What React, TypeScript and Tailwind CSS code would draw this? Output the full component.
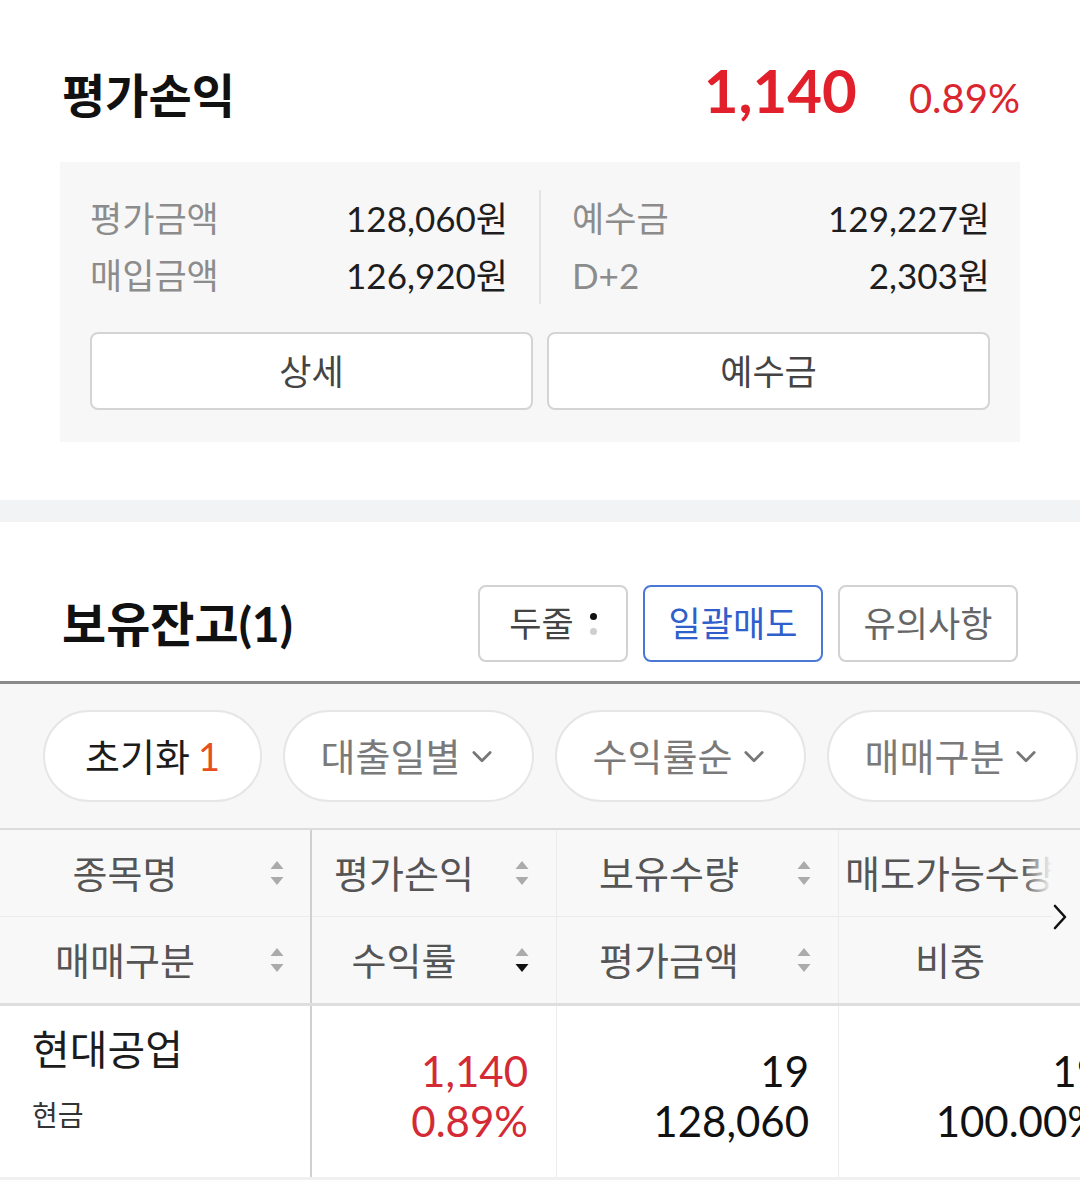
import React from "react";

const FONT = "font-[family-name:Lato,'Noto_Sans_CJK_KR',sans-serif]";

function SortIcon({ active }: { active?: boolean }) {
  return (
    <svg width="16" height="28" viewBox="0 0 16 28">
      <path d="M8 2 L14.5 10 L1.5 10 Z" fill="#ababab" />
      <path d="M1.5 18 L14.5 18 L8 26 Z" fill={active ? "#111" : "#ababab"} />
    </svg>
  );
}

function ChevronDown() {
  return (
    <svg width="28" height="28" viewBox="0 0 24 24" fill="none" stroke="#777" strokeWidth="2.4" strokeLinecap="round" strokeLinejoin="round">
      <path d="M5 9l7 7 7-7" />
    </svg>
  );
}

function InfoRow({ label, value }: { label: string; value: string }) {
  return (
    <div className="flex h-[57px] items-center justify-between">
      <span className="text-[35px] text-[#8c8c8c]">{label}</span>
      <span className="text-[35px] text-[#1e1e1e]">{value}</span>
    </div>
  );
}

function Pill({ label, badge, arrow }: { label: string; badge?: string; arrow?: boolean }) {
  return (
    <div className="flex h-[92px] items-center justify-center gap-2 rounded-full border-2 border-[#e6e6e6] bg-white">
      <span className={`text-[38px] ${badge ? "text-[#1c1c1c]" : "text-[#7a7a7a]"}`}>{label}</span>
      {badge && <span className="text-[38px] text-[#e6501e]">{badge}</span>}
      {arrow && <ChevronDown />}
    </div>
  );
}

function HeadCell({ label, textW, iconW, active }: { label: string; textW: string; iconW: string; active?: boolean }) {
  return (
    <div className="flex h-[86px] items-center">
      <div className={`${textW} text-center text-[38px] text-[#555]`}>{label}</div>
      <div className={`${iconW} flex justify-center`}>
        <SortIcon active={active} />
      </div>
    </div>
  );
}

export default function App() {
  return (
    <div className={`${FONT} w-[1080px] h-[1194px] overflow-hidden bg-white`}>
      {/* 평가손익 */}
      <section className="px-[60px] pt-[50px]">
        <div className="flex items-baseline justify-between">
          <h1 className="pl-[2px] text-[47px] font-bold leading-[58px] text-[#111]">평가손익</h1>
          <div className="flex items-baseline gap-[52px]">
            <span className="text-[60px] font-bold leading-[80px] text-[#e2202b]">1,140</span>
            <span className="text-[40px] text-[#d9262f]">0.89%</span>
          </div>
        </div>

        <div className="mt-[32px] bg-[#f7f7f7] px-[30px] pt-[28px] pb-[32px]">
          <div className="flex">
            <div className="w-[449px] pr-[31px]">
              <InfoRow label="평가금액" value="128,060원" />
              <InfoRow label="매입금액" value="126,920원" />
            </div>
            <div className="w-[2px] bg-[#e4e4e4]" />
            <div className="flex-1 pl-[31px]">
              <InfoRow label="예수금" value="129,227원" />
              <InfoRow label="D+2" value="2,303원" />
            </div>
          </div>
          <div className="mt-[28px] grid grid-cols-2 gap-[14px]">
            <button className="h-[78px] rounded-[8px] border-2 border-[#d4d4d4] bg-white text-[35px] text-[#444]">상세</button>
            <button className="h-[78px] rounded-[8px] border-2 border-[#d4d4d4] bg-white text-[35px] text-[#444]">예수금</button>
          </div>
        </div>
      </section>

      <div className="mt-[58px] h-[22px] bg-[#f2f3f5]" />

      {/* 보유잔고 */}
      <section>
        <div className="flex items-center justify-between px-[62px] pt-[63px] pb-[19px]">
          <h2 className="text-[48px] font-bold text-[#111]">보유잔고(1)</h2>
          <div className="flex gap-[15px]">
            <button className="flex h-[77px] w-[150px] items-center justify-center gap-[16px] rounded-[8px] border-2 border-[#d2d2d2] bg-white text-[35px] text-[#444]">
              <span>두줄</span>
              <span className="flex flex-col gap-[8px]">
                <span className="h-[7px] w-[7px] rounded-full bg-[#111]" />
                <span className="h-[7px] w-[7px] rounded-full bg-[#cfcfcf]" />
              </span>
            </button>
            <button className="h-[77px] w-[180px] rounded-[8px] border-2 border-[#4a78d6] bg-white text-[35px] text-[#2f5fcb]">일괄매도</button>
            <button className="h-[77px] w-[180px] rounded-[8px] border-2 border-[#d2d2d2] bg-white text-[35px] text-[#666]">유의사항</button>
          </div>
        </div>

        <div className="border-t-[3px] border-b-2 border-t-[#8a8a8a] border-b-[#dcdcdc] bg-[#f7f7f7] px-[43px] py-[26px]">
          <div className="flex gap-[21px]">
            <div className="w-[219px] shrink-0"><Pill label="초기화" badge="1" /></div>
            <div className="w-[251px] shrink-0"><Pill label="대출일별" arrow /></div>
            <div className="w-[251px] shrink-0"><Pill label="수익률순" arrow /></div>
            <div className="w-[251px] shrink-0"><Pill label="매매구분" arrow /></div>
          </div>
        </div>

        {/* table header */}
        <div className="relative flex border-b-[3px] border-[#dedede] bg-[#f8f8f8]">
          <div className="w-[312px] shrink-0 border-r-2 border-[#d0d0d0]">
            <div className="border-b border-[#ececec]">
              <HeadCell label="종목명" textW="w-[250px]" iconW="w-[54px]" />
            </div>
            <HeadCell label="매매구분" textW="w-[250px]" iconW="w-[54px]" />
          </div>
          <div className="w-[245px] shrink-0 border-r border-[#ececec]">
            <div className="border-b border-[#ececec]">
              <HeadCell label="평가손익" textW="w-[184px]" iconW="w-[52px]" />
            </div>
            <HeadCell label="수익률" textW="w-[184px]" iconW="w-[52px]" active />
          </div>
          <div className="w-[282px] shrink-0 border-r border-[#ececec]">
            <div className="border-b border-[#ececec]">
              <HeadCell label="보유수량" textW="w-[224px]" iconW="w-[46px]" />
            </div>
            <HeadCell label="평가금액" textW="w-[224px]" iconW="w-[46px]" />
          </div>
          <div className="w-[262px] shrink-0">
            <div className="relative flex h-[87px] w-[213px] items-center overflow-hidden border-b border-[#ececec] pl-[6px]">
              <span className="whitespace-nowrap text-[38px] text-[#555]">매도가능수량</span>
              <div className="absolute inset-y-0 right-0 w-[30px] bg-gradient-to-r from-[#f8f8f8]/0 to-[#f8f8f8]" />
            </div>
            <div className="flex h-[86px] w-[222px] items-center justify-center text-[38px] text-[#555]">비중</div>
          </div>
          <svg className="absolute left-[1050px] top-[73px]" width="20" height="28" viewBox="0 0 20 28" fill="none" stroke="#111" strokeWidth="2.6" strokeLinecap="round" strokeLinejoin="round">
            <path d="M5 3l10 11-10 11" />
          </svg>
        </div>

        {/* data row */}
        <div className="flex h-[174px] border-b-[3px] border-[#f0f0f0]">
          <div className="w-[312px] shrink-0 border-r-2 border-[#d0d0d0] pl-[32px] pt-[16px]">
            <div className="text-[41px] leading-[56px] text-[#1c1c1c]">현대공업</div>
            <div className="mt-[16px] text-[28px] text-[#333]">현금</div>
          </div>
          <div className="flex w-[245px] shrink-0 flex-col items-end justify-center border-r border-[#ececec] pr-[28px] pt-[8px] text-[42px] leading-[50px] text-[#d32a35]">
            <span>1,140</span>
            <span>0.89%</span>
          </div>
          <div className="flex w-[282px] shrink-0 flex-col items-end justify-center border-r border-[#ececec] pr-[29px] pt-[8px] text-[42px] leading-[50px] text-[#111]">
            <span>19</span>
            <span>128,060</span>
          </div>
          <div className="flex w-[262px] shrink-0 flex-col items-end justify-center pt-[8px] text-[42px] leading-[50px] text-[#111]">
            <span>19</span>
            <span>100.00%</span>
          </div>
        </div>
      </section>
    </div>
  );
}
